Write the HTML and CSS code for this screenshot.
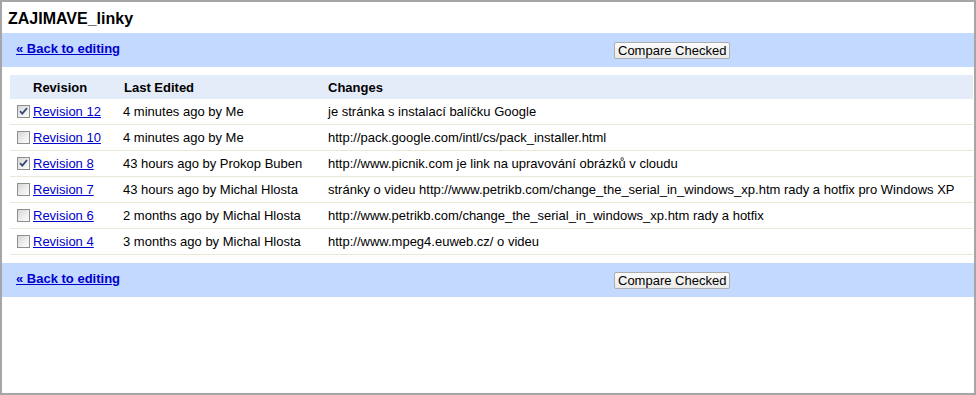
FILE: index.html
```html
<!DOCTYPE html>
<html lang="cs">
<head>
    <meta charset="UTF-8">
    <title>ZAJIMAVE_linky - Revisions</title>
    <link rel="stylesheet" href="styles.css">
</head>
<body>
    <div class="page">
        <h1 class="page-title">ZAJIMAVE_linky</h1>

        <div class="action-bar">
            <a class="back-link" href="#">&laquo; Back to editing</a>
            <div><button class="compare-btn">Compare Checked</button></div>
        </div>

        <div class="history">
            <table class="revisions">
                <colgroup>
                    <col class="col-check">
                    <col class="col-rev">
                    <col class="col-edited">
                    <col>
                </colgroup>
                <thead>
                    <tr>
                        <th></th>
                        <th>Revision</th>
                        <th>Last Edited</th>
                        <th>Changes</th>
                    </tr>
                </thead>
                <tbody>
                    <tr>
                        <td><span class="cb checked"><svg viewBox="0 0 11 11" width="11" height="11"><path d="M2 5.2 L4.3 7.6 L9 2.2" fill="none" stroke="#3a4a7c" stroke-width="1.8"/></svg></span></td>
                        <td><a href="#">Revision 12</a></td>
                        <td>4 minutes ago by Me</td>
                        <td>je stránka s instalací balíčku Google</td>
                    </tr>
                    <tr>
                        <td><span class="cb"></span></td>
                        <td><a href="#">Revision 10</a></td>
                        <td>4 minutes ago by Me</td>
                        <td>http://pack.google.com/intl/cs/pack_installer.html</td>
                    </tr>
                    <tr>
                        <td><span class="cb checked"><svg viewBox="0 0 11 11" width="11" height="11"><path d="M2 5.2 L4.3 7.6 L9 2.2" fill="none" stroke="#3a4a7c" stroke-width="1.8"/></svg></span></td>
                        <td><a href="#">Revision 8</a></td>
                        <td>43 hours ago by Prokop Buben</td>
                        <td>http://www.picnik.com je link na upravování obrázků v cloudu</td>
                    </tr>
                    <tr>
                        <td><span class="cb"></span></td>
                        <td><a href="#">Revision 7</a></td>
                        <td>43 hours ago by Michal Hlosta</td>
                        <td>stránky o videu http://www.petrikb.com/change_the_serial_in_windows_xp.htm rady a hotfix pro Windows XP</td>
                    </tr>
                    <tr>
                        <td><span class="cb"></span></td>
                        <td><a href="#">Revision 6</a></td>
                        <td>2 months ago by Michal Hlosta</td>
                        <td>http://www.petrikb.com/change_the_serial_in_windows_xp.htm rady a hotfix</td>
                    </tr>
                    <tr>
                        <td><span class="cb"></span></td>
                        <td><a href="#">Revision 4</a></td>
                        <td>3 months ago by Michal Hlosta</td>
                        <td>http://www.mpeg4.euweb.cz/ o videu</td>
                    </tr>
                </tbody>
            </table>
        </div>

        <div class="action-bar">
            <a class="back-link" href="#">&laquo; Back to editing</a>
            <div><button class="compare-btn">Compare Checked</button></div>
        </div>
    </div>
</body>
</html>
```

FILE: styles.css
```css
* {
    margin: 0;
    padding: 0;
    box-sizing: border-box;
}

html, body {
    height: 100%;
}

body {
    font-family: "Liberation Sans", Arial, sans-serif;
    font-size: 13px;
    line-height: 15px;
    color: #000;
    background: #fff;
}

.page {
    height: 395px;
    border: 2px solid #a6a6a6;
    overflow: hidden;
}

a {
    color: #0000cc;
    text-decoration: underline;
}

.page-title {
    font-size: 16px;
    line-height: 18px;
    font-weight: bold;
    margin: 8px 6px 5px;
}

.action-bar {
    display: grid;
    grid-template-columns: 598px auto;
    height: 34px;
    padding: 8px 0 0 14px;
    background: #c3d9ff;
}

.back-link {
    font-weight: bold;
}

.compare-btn {
    margin-top: 1px;
    height: 17px;
    padding: 0 3px;
    font-family: "Liberation Sans", Arial, sans-serif;
    font-size: 13px;
    line-height: 15px;
    color: #000;
    background: linear-gradient(#fbfbfb, #e9e9e9);
    border: 1px solid #adadad;
    border-radius: 2px;
}

.history {
    padding: 8px 1px 8px 8px;
}

.revisions {
    width: 100%;
    table-layout: fixed;
    border-collapse: separate;
    border-spacing: 0;
}

.col-check { width: 23px; }
.col-rev { width: 90px; }
.col-edited { width: 205px; }

.revisions th {
    height: 24px;
    text-align: left;
    font-weight: bold;
    background: #e5ecf9;
    vertical-align: middle;
    white-space: nowrap;
}

.revisions th:nth-child(3) {
    padding-left: 1px;
}

.revisions td {
    height: 26px;
    border-bottom: 1px solid #ebe8d5;
    vertical-align: middle;
    white-space: nowrap;
}

.cb {
    display: block;
    width: 13px;
    height: 13px;
    margin-left: 7px;
    border: 1px solid #8e8f8f;
    background: linear-gradient(135deg, #d6d6d6 0%, #f0f0f0 60%, #fdfdfd 100%);
}

.cb svg {
    display: block;
}
```
